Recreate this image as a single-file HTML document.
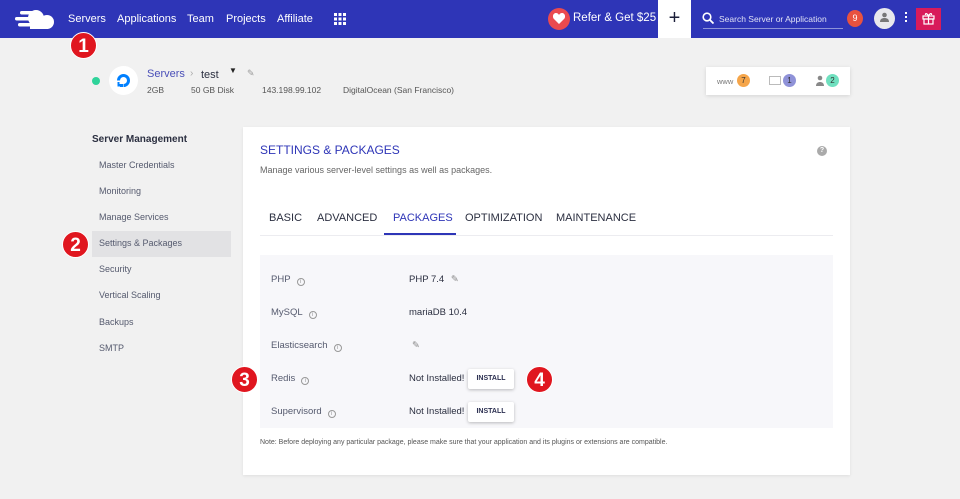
<!DOCTYPE html>
<html><head><meta charset="utf-8"><style>
*{margin:0;padding:0;box-sizing:border-box}
body{width:960px;height:499px;background:#f1f1f1;font-family:"Liberation Sans",sans-serif;position:relative;overflow:hidden;color:#3a3f55}
.a{position:absolute;white-space:nowrap}
.nav{position:absolute;left:0;top:0;width:960px;height:38px;background:#2e35b7}
.nl{color:#fff;font-size:11px;top:13px}
.badge{position:absolute;width:27px;height:27px;border-radius:50%;background:#e0161f;color:#fff;font-weight:bold;font-size:19px;text-align:center;line-height:27px;border:1px solid #fff}
.side{font-size:9px;color:#555a6e;left:99px}
.lab{font-size:9.5px;color:#555a6e;left:271px}
.val{font-size:9.5px;color:#2b2f40;left:409px}
.info{display:inline-block;width:8px;height:8px;border:1px solid #999;border-radius:50%;margin-left:6px;vertical-align:-1px;font-size:6px;line-height:6px;text-align:center;color:#999}
.btn{position:absolute;left:468px;width:46px;height:20px;background:#fff;border-radius:2px;box-shadow:0 1px 3px rgba(0,0,0,.25);font-size:7px;font-weight:bold;color:#2b2f50;text-align:center;line-height:20px}
.tab{font-size:11px;color:#2b2f40;top:212px}
</style></head><body>
<div class="nav"></div>
<svg class="a" style="left:14px;top:8px" width="42" height="22" viewBox="0 0 42 22"><g fill="#fff"><circle cx="22" cy="10" r="8"/><circle cx="33" cy="14" r="7"/><rect x="16" y="12" width="18" height="9"/><rect x="6" y="3" width="16" height="3.5" rx="1.7"/><rect x="1" y="9" width="20" height="3.5" rx="1.7"/><rect x="4" y="15" width="18" height="3.5" rx="1.7"/></g><g fill="#2e35b7"><rect x="10" y="12.5" width="4" height="2.5"/></g></svg>
<div class="a nl" style="left:68px">Servers</div>
<div class="a nl" style="left:117px">Applications</div>
<div class="a nl" style="left:187px">Team</div>
<div class="a nl" style="left:226px">Projects</div>
<div class="a nl" style="left:277px">Affiliate</div>
<svg class="a" style="left:334px;top:13px" width="12" height="12"><g fill="#fff"><rect x="0" y="0" width="3" height="3"/><rect x="4.5" y="0" width="3" height="3"/><rect x="9" y="0" width="3" height="3"/><rect x="0" y="4.5" width="3" height="3"/><rect x="4.5" y="4.5" width="3" height="3"/><rect x="9" y="4.5" width="3" height="3"/><rect x="0" y="9" width="3" height="3"/><rect x="4.5" y="9" width="3" height="3"/><rect x="9" y="9" width="3" height="3"/></g></svg>
<div class="a" style="left:548px;top:8px;width:22px;height:22px;border-radius:50%;background:#ea4a4f"></div>
<svg class="a" style="left:553px;top:13px" width="12" height="11" viewBox="0 0 12 11"><path d="M6 11L1 6C-1 4 0 0 3 0c1.5 0 2.5 1 3 2 .5-1 1.5-2 3-2 3 0 4 4 2 6z" fill="#fff"/></svg>
<div class="a" style="left:573px;top:12px;color:#fff;font-size:11.5px">Refer &amp; Get $25</div>
<div class="a" style="left:658px;top:0;width:33px;height:38px;background:#fff;color:#1c1f3a;font-size:20px;text-align:center;line-height:36px">+</div>
<svg class="a" style="left:702px;top:12px" width="12" height="12"><circle cx="5" cy="5" r="3.8" stroke="#fff" stroke-width="1.6" fill="none"/><path d="M8 8l3.5 3.5" stroke="#fff" stroke-width="1.8"/></svg>
<div class="a" style="left:719px;top:14px;color:#dfe1f5;font-size:8.5px">Search Server or Application</div>
<div class="a" style="left:703px;top:28px;width:140px;height:1px;background:#8d92d8"></div>
<div class="a" style="left:847px;top:10px;width:16px;height:17px;border-radius:50%;background:#e8523f;color:#fff;font-size:9px;text-align:center;line-height:17px">9</div>
<div class="a" style="left:874px;top:8px;width:21px;height:21px;border-radius:50%;background:#e8e8ec"></div>
<svg class="a" style="left:879px;top:12px" width="11" height="11"><circle cx="5.5" cy="3" r="2.3" fill="#777"/><path d="M1 10c0-3 2-4 4.5-4S10 7 10 10z" fill="#777"/></svg>
<div class="a" style="left:905px;top:12px;width:2px;height:2px;background:#fff;box-shadow:0 4px #fff,0 8px #fff"></div>
<div class="a" style="left:916px;top:8px;width:25px;height:22px;background:#d81b5a"></div>
<svg class="a" style="left:922px;top:12px" width="13" height="13" viewBox="0 0 13 13"><g stroke="#fff" stroke-width="1.2" fill="none"><rect x="1" y="4" width="11" height="3"/><rect x="2" y="7" width="9" height="5"/><path d="M6.5 4v8M6.5 4C5 1 3 1 3.5 3M6.5 4C8 1 10 1 9.5 3"/></g></svg>

<div class="badge" style="left:70px;top:32px">1</div>
<div class="a" style="left:92px;top:77px;width:8px;height:8px;border-radius:50%;background:#2fd39a"></div>
<div class="a" style="left:109px;top:66px;width:29px;height:29px;border-radius:50%;background:#fff"></div>
<svg class="a" style="left:115px;top:72px" width="17" height="17" viewBox="0 0 17 17"><path d="M8.5 15V12A3.5 3.5 0 1 0 5 8.5H2A6.5 6.5 0 1 1 8.5 15z" fill="#0080ff"/><rect x="5" y="12" width="3" height="3" fill="#0080ff"/><rect x="2.5" y="12" width="2.5" height="2.5" fill="#0080ff"/><rect x="2.5" y="10" width="2" height="2" fill="#0080ff"/></svg>
<div class="a" style="left:147px;top:68px;font-size:11px;color:#4a4fb8">Servers</div>
<div class="a" style="left:190px;top:68px;font-size:10px;color:#aaa">›</div>
<div class="a" style="left:201px;top:69px;font-size:11px;color:#2b2f40">test</div>
<div class="a" style="left:229px;top:66px;font-size:8px;color:#222">▼</div>
<div class="a" style="left:247px;top:68px;font-size:9px;color:#999">✎</div>
<div class="a" style="left:147px;top:85px;font-size:8.5px;color:#555">2GB</div>
<div class="a" style="left:191px;top:85px;font-size:8.5px;color:#555">50 GB Disk</div>
<div class="a" style="left:262px;top:85px;font-size:8.5px;color:#555">143.198.99.102</div>
<div class="a" style="left:343px;top:85px;font-size:8.5px;color:#555">DigitalOcean (San Francisco)</div>

<div class="a" style="left:706px;top:67px;width:144px;height:28px;background:#fff;box-shadow:0 1px 4px rgba(0,0,0,.12)"></div>
<div class="a" style="left:717px;top:77px;font-size:7.5px;color:#777">www</div>
<div class="a" style="left:737px;top:74px;width:13px;height:13px;border-radius:50%;background:#f5a54a;font-size:8px;text-align:center;line-height:13px;color:#333">7</div>
<div class="a" style="left:769px;top:76px;width:12px;height:9px;border:1px solid #bbb"></div>
<div class="a" style="left:783px;top:74px;width:13px;height:13px;border-radius:50%;background:#8f92d8;font-size:8px;text-align:center;line-height:13px;color:#333">1</div>
<svg class="a" style="left:815px;top:75px" width="10" height="11"><circle cx="5" cy="3" r="2.3" fill="#888"/><path d="M1 11c0-3 2-4 4-4s4 1 4 4z" fill="#888"/></svg>
<div class="a" style="left:826px;top:74px;width:13px;height:13px;border-radius:50%;background:#6fe0bf;font-size:8px;text-align:center;line-height:13px;color:#333">2</div>

<div class="a" style="left:92px;top:134px;font-size:10px;font-weight:bold;color:#2b2f40">Server Management</div>
<div class="a" style="left:92px;top:231px;width:139px;height:26px;background:#e2e2e4"></div>
<div class="a side" style="top:160px">Master Credentials</div>
<div class="a side" style="top:186px">Monitoring</div>
<div class="a side" style="top:212px">Manage Services</div>
<div class="a side" style="top:238px">Settings &amp; Packages</div>
<div class="a side" style="top:264px">Security</div>
<div class="a side" style="top:290px">Vertical Scaling</div>
<div class="a side" style="top:317px">Backups</div>
<div class="a side" style="top:343px">SMTP</div>
<div class="badge" style="left:62px;top:231px">2</div>

<div class="a" style="left:243px;top:127px;width:607px;height:348px;background:#fff;box-shadow:0 1px 3px rgba(0,0,0,.08)"></div>
<div class="a" style="left:260px;top:143px;font-size:12px;color:#2e35b7">SETTINGS &amp; PACKAGES</div>
<div class="a" style="left:260px;top:165px;font-size:9px;color:#666">Manage various server-level settings as well as packages.</div>
<div class="a" style="left:817px;top:146px;width:10px;height:10px;border-radius:50%;background:#aaa;color:#fff;font-size:7px;text-align:center;line-height:10px;font-weight:bold">?</div>
<div class="a tab" style="left:269px">BASIC</div>
<div class="a tab" style="left:317px">ADVANCED</div>
<div class="a tab" style="left:393px;color:#2e35b7">PACKAGES</div>
<div class="a tab" style="left:465px">OPTIMIZATION</div>
<div class="a tab" style="left:556px">MAINTENANCE</div>
<div class="a" style="left:260px;top:235px;width:573px;height:1px;background:#ececf0"></div>
<div class="a" style="left:384px;top:233px;width:72px;height:2px;background:#2e35b7"></div>

<div class="a" style="left:260px;top:255px;width:573px;height:173px;background:#f7f7fa"></div>
<div class="a lab" style="top:274px">PHP<span class="info">i</span></div>
<div class="a lab" style="top:307px">MySQL<span class="info">i</span></div>
<div class="a lab" style="top:340px">Elasticsearch<span class="info">i</span></div>
<div class="a lab" style="top:373px">Redis<span class="info">i</span></div>
<div class="a lab" style="top:406px">Supervisord<span class="info">i</span></div>
<div class="a val" style="top:274px">PHP 7.4 <span style="color:#888;margin-left:4px">✎</span></div>
<div class="a val" style="top:307px">mariaDB 10.4</div>
<div class="a val" style="top:340px;left:412px;color:#888">✎</div>
<div class="a val" style="top:373px">Not Installed!</div>
<div class="a val" style="top:406px">Not Installed!</div>
<div class="btn" style="top:369px">INSTALL</div>
<div class="btn" style="top:402px">INSTALL</div>
<div class="badge" style="left:231px;top:366px">3</div>
<div class="badge" style="left:526px;top:366px">4</div>
<div class="a" style="left:260px;top:439px;font-size:7px;color:#555">Note: Before deploying any particular package, please make sure that your application and its plugins or extensions are compatible.</div>
</body></html>
